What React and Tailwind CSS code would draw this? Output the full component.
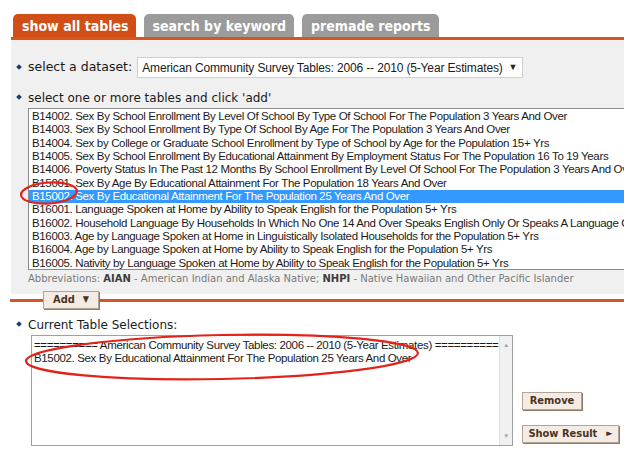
const verdana = { fontFamily: '"DejaVu Sans", Verdana, sans-serif' }
const tahoma = { fontFamily: '"DejaVu Sans Condensed", "DejaVu Sans", sans-serif' }
const arial = { fontFamily: '"Liberation Sans", Arial, sans-serif' }

const tables = [
  'B14002. Sex By School Enrollment By Level Of School By Type Of School For The Population 3 Years And Over',
  'B14003. Sex By School Enrollment By Type Of School By Age For The Population 3 Years And Over',
  'B14004. Sex by College or Graduate School Enrollment by Type of School by Age for the Population 15+ Yrs',
  'B14005. Sex By School Enrollment By Educational Attainment By Employment Status For The Population 16 To 19 Years',
  'B14006. Poverty Status In The Past 12 Months By School Enrollment By Level Of School For The Population 3 Years And Over',
  'B15001. Sex By Age By Educational Attainment For The Population 18 Years And Over',
  'B15002. Sex By Educational Attainment For The Population 25 Years And Over',
  'B16001. Language Spoken at Home by Ability to Speak English for the Population 5+ Yrs',
  'B16002. Household Language By Households In Which No One 14 And Over Speaks English Only Or Speaks A Language Other Than English',
  'B16003. Age by Language Spoken at Home in Linguistically Isolated Households for the Population 5+ Yrs',
  'B16004. Age by Language Spoken at Home by Ability to Speak English for the Population 5+ Yrs',
  'B16005. Nativity by Language Spoken at Home by Ability to Speak English for the Population 5+ Yrs',
]

function Bullet() {
  return <span className="inline-block w-[4px] h-[4px] rotate-45 bg-[#1d3c6e] mr-[7px] mb-[2px]" />
}

function Btn({ children, className = '' }) {
  return (
    <div
      className={`h-[18px] flex items-center justify-center bg-[#f4ece4] border border-[#b4a292] shadow-[1px_1px_0_#8c7a6a] text-[11px] font-bold text-[#4b3324] ${className}`}
      style={tahoma}
    >
      {children}
    </div>
  )
}

export default function App() {
  return (
    <div className="relative w-[624px] h-[471px] overflow-hidden bg-white text-[#1a1a1a]">
      {/* tabs */}
      <div className="flex items-end gap-[8px] pl-[13px] pt-[14px]" style={tahoma}>
        <div className="h-[23px] pl-[9px] pr-[7px] rounded-t-[5px] bg-[#d14f16] text-white font-bold text-[14px] leading-[24px]">show all tables</div>
        <div className="h-[23px] pl-[9px] pr-[8px] rounded-t-[5px] bg-[#9b9b9b] text-white font-bold text-[14px] leading-[24px]">search by keyword</div>
        <div className="h-[23px] pl-[9px] pr-[8px] rounded-t-[5px] bg-[#9b9b9b] text-white font-bold text-[14px] leading-[24px]">premade reports</div>
      </div>

      {/* dataset panel */}
      <div className="ml-[11px] border-t-[3px] border-[#d9541e] bg-[#f0f0f0] h-[257px] flex flex-col">
        <div className="flex items-center mt-[17px] pl-[6px]">
          <Bullet />
          <span className="text-[12.5px]" style={verdana}>select a dataset:</span>
          <div className="ml-[5px] w-[386px] h-[21px] bg-white border border-[#d0d0d0] flex items-center pl-[4px] pr-[5px] text-[12px] tracking-[-0.15px]" style={arial}>
            <span className="flex-1 whitespace-nowrap">American Community Survey Tables: 2006 -- 2010 (5-Year Estimates)</span>
            <span className="text-[9px] text-[#222]">▼</span>
          </div>
        </div>
        <div className="flex items-center mt-[11px] pl-[6px]">
          <Bullet />
          <span className="text-[12px]" style={verdana}>select one or more tables and click 'add'</span>
        </div>
        <div className="ml-[17px] mt-[1px] w-[640px] h-[162px] bg-white border border-[#8c8c8c] overflow-hidden py-[1px] text-[11.5px] tracking-[-0.35px]" style={arial}>
          {tables.map((t, i) => (
            <div
              key={t}
              className={`h-[13.33px] leading-[13.33px] pl-[3px] whitespace-nowrap ${i === 6 ? 'bg-[#3399ff] text-white' : ''}`}
            >
              {t}
            </div>
          ))}
        </div>
        <div className="ml-[17px] mt-[1px] text-[10px] text-[#7a7a7a] whitespace-nowrap" style={verdana}>
          Abbreviations: <b className="text-[#3c3c3c]">AIAN</b> - American Indian and Alaska Native; <b className="text-[#3c3c3c]">NHPI</b> - Native Hawaiian and Other Pacific Islander
        </div>
      </div>

      {/* add bar */}
      <div className="flex items-center ml-[10px] -mt-[3px]">
        <div className="w-[33px] h-[3px] bg-[#d9541e]" />
        <Btn className="w-[56px] gap-[8px]">
          <span>Add</span>
          <span className="text-[9px]">▼</span>
        </Btn>
        <div className="flex-1 h-[3px] bg-[#d9541e]" />
      </div>

      {/* current selections */}
      <div className="flex items-center mt-[7px] pl-[17px]">
        <Bullet />
        <span className="text-[12px]" style={verdana}>Current Table Selections:</span>
      </div>
      <div className="flex mt-[1px] pl-[31px]">
        <div className="w-[482px] h-[111px] bg-white border border-[#a0a0a0] flex text-[11.5px] tracking-[-0.35px]" style={arial}>
          <div className="flex-1 pl-[2px] pt-[3px] leading-[13px] whitespace-nowrap overflow-hidden">
            <div>========== American Community Survey Tables: 2006 -- 2010 (5-Year Estimates) ==========</div>
            <div>B15002. Sex By Educational Attainment For The Population 25 Years And Over</div>
          </div>
          <div className="w-[13px] bg-[#f0f0f0] border-l border-[#e2e2e2] flex flex-col justify-between items-center py-[6px] text-[#a0a0a0]">
            <span className="text-[6px] leading-none">▲</span>
            <span className="text-[6px] leading-none">▼</span>
          </div>
        </div>
        <div className="ml-[9px] flex flex-col pt-[57px] gap-[15px]">
          <Btn className="w-[60px]">Remove</Btn>
          <Btn className="w-[97px] gap-[9px]">
            <span>Show Result</span>
            <span className="text-[9px]">►</span>
          </Btn>
        </div>
      </div>

      {/* red annotation ellipses */}
      <svg className="absolute left-0 top-0 pointer-events-none" width="624" height="471">
        <ellipse cx="49" cy="193" rx="28" ry="10.5" fill="none" stroke="#e3231b" strokeWidth="2.2" transform="rotate(-4 49 193)" />
        <ellipse cx="222" cy="357" rx="196" ry="22" fill="none" stroke="#e3231b" strokeWidth="2.2" transform="rotate(-1.2 222 357)" />
      </svg>
    </div>
  )
}
